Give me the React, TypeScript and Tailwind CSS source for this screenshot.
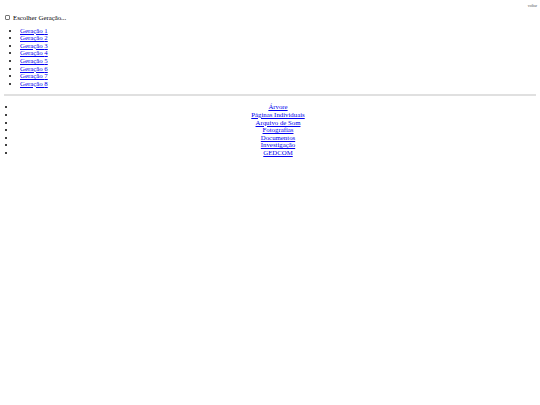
export default function App() {
  const gens = [1, 2, 3, 4, 5, 6, 7, 8];
  const links = [
    "Árvore",
    "Páginas Individuais",
    "Arquivo de Som",
    "Fotografias",
    "Documentos",
    "Investigação",
    "GEDCOM",
  ];
  return (
    <div className="min-h-[405px] bg-white font-['Liberation_Serif',serif] text-[6.8px] leading-[7.6px] text-black">
      <div className="flex justify-end pr-[3px] pt-[4px]">
        <a className="text-[4px] leading-[4px] text-[#555]">voltar</a>
      </div>
      <div className="mt-[6px] flex items-center gap-[3px] pl-[5px]">
        <span className="inline-block h-[5px] w-[5px] rounded-[1px] border border-[#767676] bg-white" />
        <span>Escolher Geração...</span>
      </div>
      <ul className="mt-[5px] list-disc pl-[20px]">
        {gens.map((g) => (
          <li key={g}>
            <a href="#" className="text-[#0000ee] underline">
              Geração {g}
            </a>
          </li>
        ))}
      </ul>
      <hr className="mx-[4px] mt-[7px] border-t-[2px] border-[#e0e0e0]" />
      <ul className="mt-[7px] list-disc pl-[16px]">
        {links.map((l) => (
          <li key={l} className="text-center">
            <a href="#" className="text-[#0000ee] underline">
              {l}
            </a>
          </li>
        ))}
      </ul>
    </div>
  );
}
